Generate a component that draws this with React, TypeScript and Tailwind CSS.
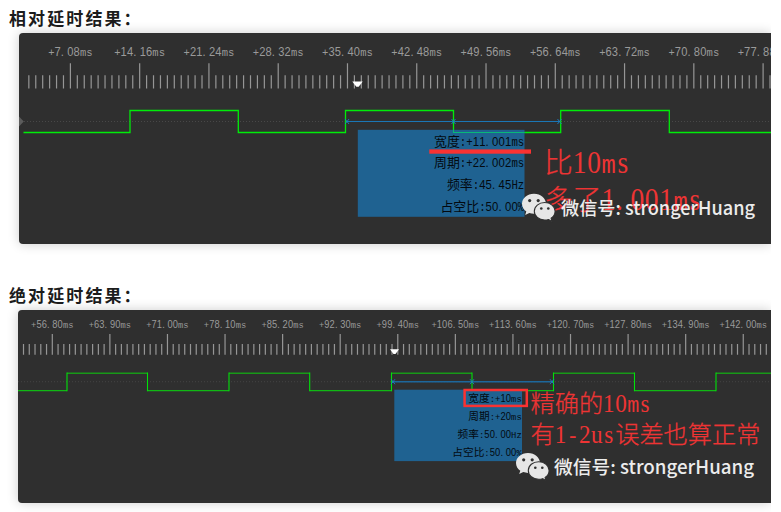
import React from "react";

const SANS = '"Liberation Sans", "Noto Sans CJK SC", sans-serif';
const MONO = '"Liberation Mono", "Noto Sans CJK SC", monospace';
const SERIF = '"Liberation Serif", "Noto Sans CJK SC", serif';
const CJK = '"Noto Sans CJK SC", sans-serif';

type CellTextProps = {
  text: string;
  x: number;
  y: number;
  cell: number;
  anchor?: "start" | "middle" | "end";
  fill: string;
  large?: boolean;
};

const isWide = (c: string) => c.charCodeAt(0) > 255;

/** Horizontal squeeze of the Latin runs, which are tall and narrow. */
const SQUEEZE = 0.9;

/** Text set on a fixed grid: Latin characters take one cell, Chinese ones two. */
function CellText({ text, x, y, cell, anchor = "start", fill, large }: CellTextProps) {
  const runs = text.match(/[\u0000-\u00ff]+|[^\u0000-\u00ff]+/g) ?? [];
  const total = [...text].reduce((n, c) => n + (isWide(c) ? 2 : 1) * cell, 0);
  let cx = anchor === "start" ? x : anchor === "middle" ? x - total / 2 : x - total;
  return (
    <g fill={fill}>
      {runs.map((run, r) => {
        const start = cx;
        if (isWide(run[0])) {
          cx += run.length * cell * 2;
          return (
            <text
              key={r}
              x={[...run].map((_, i) => start + i * cell * 2).join(" ")}
              y={y}
              fontFamily={CJK}
              fontSize={cell * 2}
              fontWeight={large ? 300 : 400}
              stroke={large ? fill : "none"}
              strokeWidth={large ? 0.25 : 0}
            >
              {run}
            </text>
          );
        }
        cx += run.length * cell;
        return (
          <text key={r} transform={`translate(${start} ${y}) scale(${SQUEEZE} 1)`}>
            {[...run].map((c, i) => {
              const mono = large ? /[m\-]/.test(c) : /[a-zA-Z+%:]/.test(c);
              const size = mono ? cell * 1.84 : large ? cell * 2.12 : cell * 1.95;
              const nudge = c === "." && !large ? 0 : c === "s" && large ? cell * 0.1 : 0;
              return (
                <tspan
                  key={i}
                  x={(i * cell + nudge) / SQUEEZE}
                  fontFamily={mono ? MONO : large ? SERIF : SANS}
                  fontSize={size}
                >
                  {c}
                </tspan>
              );
            })}
          </text>
        );
      })}
    </g>
  );
}

type RulerProps = {
  labels: string[];
  first: number;
  pitch: number;
  before: number;
  end: number;
  labelY: number;
  majorY: number;
  minorY: number;
  bottom: number;
  cell: number;
};

function Ruler({ labels, first, pitch, before, end, labelY, majorY, minorY, bottom, cell }: RulerProps) {
  const step = pitch / 10;
  const ticks: { x: number; major: boolean }[] = [];
  for (let i = -before; first + i * step < end; i++) ticks.push({ x: first + i * step, major: i % 10 === 0 });
  return (
    <g>
      {ticks.map((t, i) => (
        <line key={i} x1={t.x} x2={t.x} y1={t.major ? majorY : minorY} y2={bottom} stroke="#969696" strokeWidth="1.2" />
      ))}
      {labels.map((l, i) => (
        <CellText key={l} text={l} x={first + i * pitch} y={labelY} cell={cell} anchor="middle" fill="#9a9a9a" />
      ))}
    </g>
  );
}

function Cross({ x, y }: { x: number; y: number }) {
  return (
    <path
      d={`M${x - 2} ${y - 2.5}L${x + 2} ${y + 2.5}M${x + 2} ${y - 2.5}L${x - 2} ${y + 2.5}`}
      stroke="#1c7fc4"
      strokeWidth="0.9"
      fill="none"
    />
  );
}

function Watermark({ x, y, textX, textY, width }: { x: number; y: number; textX: number; textY: number; width: number }) {
  return (
    <g>
      <g transform={`translate(${x} ${y})`}>
        <path
          d="M12 0C5.2 0 0 4.4 0 10.1c0 3.2 1.7 5.9 4.3 7.8L3.2 21.2l4.1-2c1.5.5 3 .8 4.7.8 6.8 0 12-4.4 12-9.9S18.800 0 12 0Z"
          fill="#e6e6e6"
        />
        <ellipse cx="7.700" cy="6.900" rx="1.600" ry="1.600" fill="#303030" />
        <ellipse cx="16.200" cy="6.900" rx="1.600" ry="1.600" fill="#303030" />
        <path
          d="M22.700 8.800c-5.900 0-10.400 3.900-10.400 8.800s4.500 8.800 10.400 8.800c1.400 0 2.700-.2 3.900-.6l3.400 1.900-.9-3.100c2.500-1.700 4-4.200 4-7 0-4.900-4.600-8.800-10.400-8.800Z"
          fill="#e6e6e6"
          stroke="#303030"
          strokeWidth="1.100"
        />
        <ellipse cx="19.300" cy="14.800" rx="1.300" ry="1.300" fill="#303030" />
        <ellipse cx="26.300" cy="14.800" rx="1.300" ry="1.300" fill="#303030" />
      </g>
      <text
        x={textX}
        y={textY}
        textLength={width}
        lengthAdjust="spacingAndGlyphs"
        fontFamily={CJK}
        fontSize="18.700"
        fontWeight="500"
        fill="#ececec"
      >
        微信号: strongerHuang
      </text>
    </g>
  );
}

function RelativeChart() {
  return (
    <svg className="block" width="752" height="211" viewBox="19 33 752 211">
      <Ruler
        labels={["+7.08ms", "+14.16ms", "+21.24ms", "+28.32ms", "+35.40ms", "+42.48ms", "+49.56ms", "+56.64ms", "+63.72ms", "+70.80ms", "+77.88ms"]}
        first={70.4}
        pitch={69.27}
        before={6}
        end={771}
        labelY={55.7}
        majorY={63.3}
        minorY={75.3}
        bottom={88.5}
        cell={6.35}
      />
      <path d="M352.300 81.500h10.400l-4 5.300h-2.400Z" fill="#fff" />
      <path d="M19 116.500l4.800 5-4.800 5Z" fill="#5c5c5c" />
      <path d="M24 121.500H771" stroke="#484848" strokeDasharray="1 2" />
      <path d="M346 121.500H560.500" stroke="#1a76b5" strokeWidth="1.100" />
      <path d="M23.500 132.500H130V110.500H238.300V132.500H345.500V110.500H453.500V132.500H560.700V110.500H669.300V132.500H771" fill="none" stroke="#00ec0a" strokeWidth="1.300" />
      <Cross x={347} y={121.5} />
      <Cross x={453.5} y={121.5} />
      <Cross x={559.5} y={121.5} />
      <rect x="357.800" y="129.800" width="166.700" height="87" fill="#1f6291" />
      <path d="M453.500 129.800V132.500H524.500" fill="none" stroke="#08b878" strokeWidth="1.100" />
      <CellText text="宽度:+11.001ms" x={524.3} y={145.7} cell={6.45} anchor="end" fill="#030a10" />
      <CellText text="周期:+22.002ms" x={524.3} y={167.4} cell={6.45} anchor="end" fill="#030a10" />
      <CellText text="频率:45.45Hz" x={524.3} y={189} cell={6.45} anchor="end" fill="#030a10" />
      <CellText text="占空比:50.00%" x={524.3} y={210.7} cell={6.45} anchor="end" fill="#030a10" />
      <rect x="429.300" y="149.400" width="101.700" height="4.300" fill="#fa3232" />
      <CellText text="比10ms" x={544} y={173.3} cell={14.4} fill="#ee3434" large />
      <CellText text="多了1.001ms" x={544} y={210.3} cell={14.4} fill="#ee3434" large />
      <Watermark x={522} y={193.7} textX={561} textY={215} width={194} />
    </svg>
  );
}

function AbsoluteChart() {
  return (
    <svg className="block" width="753" height="193" viewBox="18 310 753 193">
      <Ruler
        labels={["+56.80ms", "+63.90ms", "+71.00ms", "+78.10ms", "+85.20ms", "+92.30ms", "+99.40ms", "+106.50ms", "+113.60ms", "+120.70ms", "+127.80ms", "+134.90ms", "+142.00ms"]}
        first={52.3}
        pitch={57.58}
        before={5}
        end={769}
        labelY={328}
        majorY={334}
        minorY={344}
        bottom={354.7}
        cell={5.3}
      />
      <path d="M390 349.300h9l-3.500 4.700h-2Z" fill="#fff" />
      <path d="M18 381.700H771" stroke="#444" strokeDasharray="1 2" />
      <path d="M392 381.700H553" stroke="#1d679c" strokeWidth="1.400" />
      <path d="M18 390.600H67M147.500 390.600H229M309.700 390.600H391.500M472 390.600H553.500M634.500 390.600H716" stroke="#10b814" strokeWidth="1.300" />
      <path d="M67 373.200H147.500M229 373.200H309.700M391.500 373.200H472M553.500 373.200H634.500M716 373.200H771" stroke="#189a18" strokeWidth="1.600" />
      <path d="M67 372.500V391.200M147.500 372.500V391.200M229 372.500V391.200M309.700 372.500V391.200M391.500 372.500V391.200M472 372.500V391.200M553.500 372.500V391.200M634.500 372.500V391.200M716 372.500V391.200" stroke="#00e20a" strokeWidth="1.100" />
      <Cross x={393} y={381.7} />
      <Cross x={472} y={381.7} />
      <Cross x={552} y={381.7} />
      <rect x="394.300" y="389.700" width="127.700" height="71.400" fill="#1f6291" />
      <CellText text="宽度:+10ms" x={521.8} y={402.3} cell={5.35} anchor="end" fill="#030a10" />
      <CellText text="周期:+20ms" x={521.8} y={420.3} cell={5.35} anchor="end" fill="#030a10" />
      <CellText text="频率:50.00Hz" x={521.8} y={438} cell={5.35} anchor="end" fill="#030a10" />
      <CellText text="占空比:50.00%" x={521.8} y={456} cell={5.35} anchor="end" fill="#030a10" />
      <rect x="464.600" y="390" width="62.200" height="15.900" fill="none" stroke="#fa3232" strokeWidth="2.500" />
      <CellText text="精确的10ms" x={530.5} y={412} cell={12.1} fill="#ee3434" large />
      <CellText text="有1-2us误差也算正常" x={530.5} y={442.7} cell={12.1} fill="#ee3434" large />
      <Watermark x={516} y={452.9} textX={554} textY={474} width={200} />
    </svg>
  );
}

function Heading({ children }: { children: React.ReactNode }) {
  return (
    <h2 className="h-[22px] whitespace-nowrap pl-[9px] font-['Noto_Sans_CJK_SC',sans-serif] text-[17px] font-bold leading-[22px] tracking-[2.1px] text-[#1c1c1c]">
      {children}
    </h2>
  );
}

export default function App() {
  return (
    <main className="h-[512px] w-[781px] overflow-hidden bg-white">
      <div className="flex h-full w-[771px] flex-col overflow-hidden">
        <section className="flex flex-col gap-[4px] pt-[7px]">
          <Heading>相对延时结果：</Heading>
          <div className="ml-[19px] overflow-hidden rounded-l-[4px] bg-[#2f2f2f] shadow-[0_0_12px_rgba(0,0,0,0.2)]">
            <RelativeChart />
          </div>
        </section>
        <section className="flex flex-col gap-[4px] pt-[40px]">
          <Heading>绝对延时结果：</Heading>
          <div className="ml-[18px] overflow-hidden rounded-l-[4px] bg-[#2f2f2f] shadow-[0_0_12px_rgba(0,0,0,0.2)]">
            <AbsoluteChart />
          </div>
        </section>
      </div>
    </main>
  );
}
